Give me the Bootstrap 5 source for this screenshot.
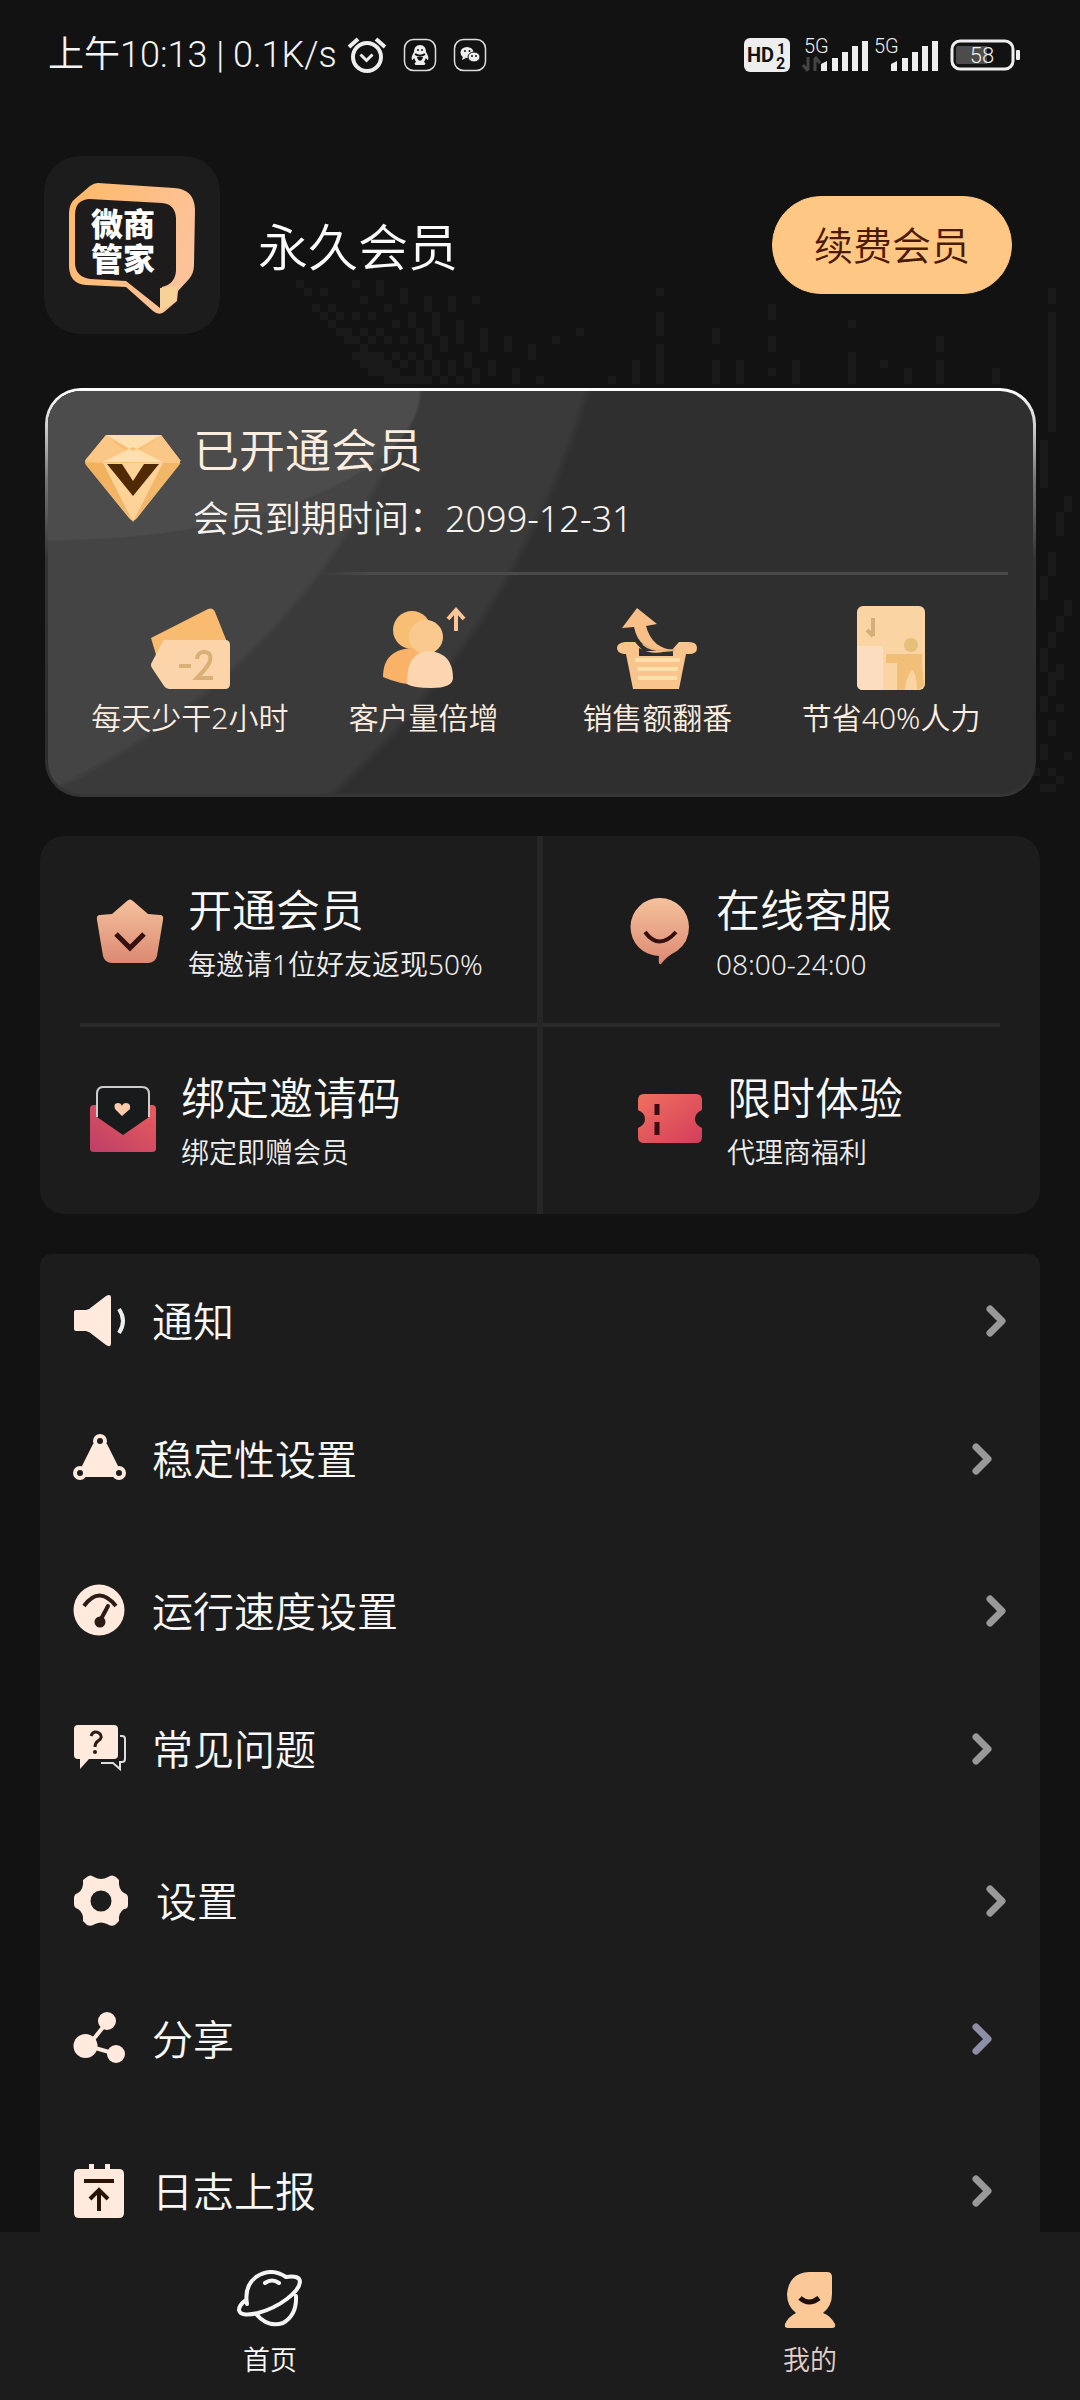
<!DOCTYPE html>
<html lang="zh-CN" data-bs-theme="dark">
<head>
<meta charset="utf-8">
<meta name="viewport" content="width=device-width, initial-scale=1">
<title>我的</title>
<link href="https://cdn.jsdelivr.net/npm/bootstrap@5.3.0/dist/css/bootstrap.min.css" rel="stylesheet">
<style>
  body { background: #121212; color: #fafafa; font-family: "Noto Sans", "Noto Sans CJK SC", sans-serif; font-weight: 350; }
  a { color: inherit; text-decoration: none; }
  svg { display: block; flex: none; }
  .wave { top: 280px; left: 280px; z-index: -1; }
  .statusbar { height: 110px; padding: 0 56px 0 48px; font-family: Roboto, "Noto Sans CJK SC", sans-serif; font-size: 36px; line-height: 40px; color: #f4f4f4; }
  .statusbar .left-icons { gap: 16px; }
  .page { padding: 0 40px; }
  .profile { padding: 0 28px 0 4px; margin-top: 46px; gap: 38px; }
  .avatar { width: 176px; height: 178px; border-radius: 36px; background: #1c1c1c; }
  .member-name { font-size: 50px; line-height: 60px; padding-top: 4px; }
  .btn-renew { --bs-btn-color: #4a1a04; --bs-btn-bg: #fec783; --bs-btn-border-color: #fec783; --bs-btn-hover-bg: #f5bb72; --bs-btn-hover-color: #4a1a04; --bs-btn-font-weight: 350; width: 240px; height: 98px; font-size: 39px; line-height: 48px; padding: 0; }
  .vip { margin: 54px 4px 0 5px; padding: 30px 25px 58px; border: 3px solid transparent; border-radius: 36px; color: #fbeee0;
    background:
      radial-gradient(ellipse 374px 150px at 0 0, #4c4c4c 99%, transparent 100%) padding-box,
      radial-gradient(circle 720px at -300px -250px, #444 99%, transparent 100%) padding-box,
      radial-gradient(circle 880px at -300px -250px, #3a3a3a 99%, transparent 100%) padding-box,
      linear-gradient(#2f2f2f, #2f2f2f) padding-box,
      linear-gradient(180deg, #fff 0, #d8d8d8 8%, #777 22%, #333 42%, #2c2c2c 90%, #363636 100%) border-box; }
  .vip-head { padding-left: 8px; gap: 8px; }
  .vip-title { font-size: 46px; line-height: 56px; }
  .vip-date { font-size: 36px; line-height: 44px; margin-top: 20px; color: #f6f2ee; }
  .vip-rule { height: 3px; margin-top: 31px; background: linear-gradient(90deg, transparent 26%, #4a4a4a 32%); }
  .perk { font-size: 30px; line-height: 36px; gap: 10px; }
  .perks { margin-top: 31px; }
  .panel { background: #1c1c1c; border-radius: 24px; }
  .quick { margin-top: 39px; }
  .quick-col { border-right: 3px solid #262626; }
  .quick-col + .quick-col { border-right: 0; border-left: 3px solid #262626; }
  .quick-link { height: 187px; gap: 24px; padding-top: 2px; }
  .rule-l + .quick-link, .rule-r + .quick-link { padding-top: 0; padding-bottom: 4px; }
  .quick-text { padding-top: 5px; }
  .quick-title { font-size: 44px; line-height: 52px; }
  .quick-sub { font-size: 28px; line-height: 36px; margin-top: 10px; color: #eee; }
  .rule-l, .rule-r { height: 4px; background: #2a2a2a; }
  .rule-l { margin-left: 40px; } .rule-r { margin-right: 40px; }
  .in-a { padding-left: 56px; } .in-b { padding-left: 49px; } .in-c { padding-left: 87px; } .in-d { padding-left: 94px; }
  .menu { margin-top: 40px; --bs-list-group-bg: transparent; --bs-list-group-border-width: 0; --bs-list-group-color: #f8f8f8; background: #1c1c1c; border-radius: 12px 12px 0 0; }
  .menu .list-group-item { height: 134px; padding: 0 34px 0 33px; font-size: 41px; line-height: 50px; gap: 25px; margin-bottom: 4px; }
  .menu .list-group-item:nth-child(even) { margin-bottom: 18px; }
  .menu .indent { padding-right: 48px; }
  .tabs { background: #1c1c1c; height: 168px; font-size: 27px; line-height: 32px; z-index: 10; }
  .tabs a { gap: 16px; padding-top: 38px; }
  .tab-on { color: #e4cfcb; }
</style>
<script src="https://cdn.jsdelivr.net/npm/bootstrap@5.3.0/dist/js/bootstrap.bundle.min.js"></script>
</head>
<body>
<!-- faint equalizer texture behind the header -->
<svg class="wave position-absolute" width="800" height="528" viewBox="0 0 100 66" fill="#1a1a1a" aria-hidden="true" shape-rendering="crispEdges"><path d="M2 0h1v1h-1zM9 0h1v1h-1zM12 0h1v2h-1zM3 1h1v1h-1zM5 1h1v1h-1zM15 1h1v2h-1zM47 1h1v1h-1zM96 1h1v2h-1zM10 2h1v1h-1zM18 2h1v2h-1zM21 2h1v2h-1zM24 2h1v1h-1zM4 3h1v1h-1zM6 3h1v1h-1zM13 3h1v1h-1zM61 3h1v2h-1zM5 4h1v1h-1zM7 4h1v1h-1zM9 4h1v1h-1zM11 4h1v1h-1zM16 4h1v2h-1zM19 4h1v3h-1zM47 4h1v3h-1zM96 4h1v15h-1zM6 5h1v1h-1zM14 5h1v1h-1zM22 5h1v3h-1zM71 5h1v1h-1zM7 6h2v1h-2zM10 6h1v1h-1zM12 6h1v1h-1zM17 6h1v2h-1zM25 6h1v3h-1zM37 6h1v1h-1zM54 6h1v2h-1zM8 7h2v1h-2zM11 7h1v1h-1zM13 7h1v1h-1zM15 7h1v1h-1zM20 7h1v2h-1zM28 7h1v2h-1zM34 7h1v1h-1zM61 7h1v2h-1zM82 7h1v2h-1zM10 8h1v1h-1zM18 8h1v2h-1zM31 8h1v2h-1zM47 8h1v5h-1zM9 9h4v1h-4zM14 9h1v1h-1zM16 9h1v1h-1zM23 9h1v2h-1zM71 9h1v4h-1zM10 10h4v1h-4zM15 10h1v1h-1zM17 10h1v3h-1zM19 10h1v2h-1zM21 10h1v2h-1zM26 10h1v2h-1zM44 10h1v3h-1zM54 10h1v3h-1zM57 10h1v3h-1zM64 10h1v3h-1zM75 10h1v1h-1zM82 10h1v3h-1zM11 11h4v1h-4zM24 11h1v2h-1zM29 11h1v2h-1zM61 11h1v1h-1zM78 11h1v2h-1zM89 11h1v2h-1zM13 12h4v1h-4zM18 12h1v1h-1zM20 12h1v1h-1zM22 12h1v1h-1zM32 12h1v1h-1zM41 12h1v1h-1zM95 20h1v6h-1zM98 27h1v2h-1zM97 29h1v3h-1zM96 34h1v3h-1zM95 37h1v3h-1zM98 40h1v2h-1zM97 42h1v2h-1zM96 44h1v2h-1zM95 46h1v3h-1zM97 48h1v2h-1zM96 49h1v3h-1zM95 52h1v2h-1zM97 53h1v1h-1zM96 55h1v2h-1zM95 58h1v2h-1zM98 59h1v1h-1zM96 61h1v1h-1zM94 61h1v1h-1zM97 62h1v1h-1zM95 63h2v1h-2z"/></svg>

<header class="statusbar d-flex align-items-center justify-content-between">
  <div class="d-flex align-items-center left-icons">
    <div class="d-flex align-items-center">
      <span>上午10:13 | 0.1K/s</span>
      <svg class="ms-2" width="42" height="36" viewBox="0 0 42 36" fill="none" stroke="#eee" stroke-width="4" aria-label="闹钟"><circle cx="22" cy="20" r="14"/><path d="M15.500 17.500l6 6 6-6" stroke-width="3"/><path d="M4 10l9-8M40 10l-9-8"/></svg>
    </div>
    <svg width="34" height="34" viewBox="0 0 34 34" aria-label="QQ"><rect x="1.500" y="1.500" width="31" height="31" rx="9" fill="none" stroke="#ddd" stroke-width="1.500"/><path d="M17 7c4 0 6 3 6 7 2 3 3 6 2 8-1 0-2-2-2-2l-2 4c2 1 2 3-1 3h-6c-3 0-3-2-1-3l-2-4s-1 2-2 2c-1-2 0-5 2-8 0-4 2-7 6-7z" fill="#eee"/><path d="M12 16c3 2 7 2 10 0" stroke="#121212" stroke-width="2" fill="none"/><circle cx="15" cy="12" r="1" fill="#121212"/><circle cx="19" cy="12" r="1" fill="#121212"/><path d="M14 19c1 5 5 5 6 0" fill="#121212"/></svg>
    <svg width="34" height="34" viewBox="0 0 34 34" aria-label="微信"><rect x="1.500" y="1.500" width="31" height="31" rx="9" fill="none" stroke="#ddd" stroke-width="1.500"/><ellipse cx="14" cy="14.500" rx="6.500" ry="5.500" fill="#eee"/><path d="M10 18l-1 4 4-2" fill="#eee"/><ellipse cx="21" cy="19" rx="6" ry="5" fill="#eee" stroke="#121212"/><g fill="#121212"><circle cx="12" cy="13" r="1"/><circle cx="16.500" cy="13" r="1"/><circle cx="19" cy="18" r="1"/><circle cx="23" cy="18" r="1"/></g></svg>
  </div>
  <svg width="280" height="44" viewBox="0 -2 280 44" fill="#eee" font-family="Roboto, sans-serif" aria-label="信号和电量">
    <rect x="0" y="3" width="46" height="34" rx="6"/>
    <g fill="#121212" font-weight="700"><text x="3" y="27" font-size="20">HD</text><text x="33" y="19" font-size="15">1</text><text x="32" y="34" font-size="16">2</text></g>
    <text x="60" y="18" font-size="20">5G</text><text x="130" y="18" font-size="20">5G</text>
    <path d="M64 22v13M59 30l5 6M71 36v-13M76 28l-5-6" stroke="#444" stroke-width="3" fill="none"/>
    <path id="bars" d="M77 29l6-3v10h-6zM88 23h6v13h-6zM98 17h6v19h-6zM108 11h6v25h-6zM118 6h6v30h-6z"/>
    <use href="#bars" x="70"/>
    <rect x="208" y="6" width="61" height="28" rx="8" fill="none" stroke="#eee" stroke-width="3"/>
    <path d="M214 11h29v18h-29q-2 0-2-2v-14q0-2 2-2z" fill="#4c4c4c"/><rect x="272" y="15" width="4" height="10" rx="1"/>
    <text x="238" y="28" font-size="22" text-anchor="middle">58</text>
  </svg>
</header>

<main class="page">
  <section class="profile d-flex align-items-center">
    <div class="avatar flex-shrink-0">
      <svg width="176" height="178" viewBox="0 0 176 178" aria-label="微商管家">
        <defs><linearGradient id="frame" x1="0" x2="1" y2=".4"><stop offset="0" stop-color="#ffb866"/><stop offset="1" stop-color="#fcc39a"/></linearGradient></defs>
        <path d="M54 27L130 32Q150 33 151 53L150 109Q150 117 145 123L134 135 133 145 120 156Q115 160 109 155L82 131 42 129Q26 128 25 111V57Q25 47 32 42L46 30Q50 27 54 27z" fill="url(#frame)"/>
        <path d="M45 43L118 47Q131 48 132 62V115Q131 128 118 131L116 152 82 125 46 123Q32 121 31 108V59Q31 44 45 43z" fill="#1d1b1c"/>
        <path d="M116 132l17-2-1 15-16 10z" fill="#f8d199"/>
        <text fill="#fff" font-family="'Noto Sans CJK SC', sans-serif" font-weight="900" font-size="32"><tspan x="47" y="80">微商</tspan><tspan x="47" y="115">管家</tspan></text>
      </svg>
    </div>
    <div class="member-name flex-grow-1">永久会员</div>
    <button type="button" class="btn btn-renew rounded-pill">续费会员</button>
  </section>

  <section class="vip">
    <div class="vip-head d-flex align-items-start">
      <svg class="mt-2" width="104" height="100" viewBox="0 0 104 100" aria-hidden="true">
        <defs><linearGradient id="gold" x1="0" y1="0" x2="1" y2="1"><stop offset="0" stop-color="#f5b45c"/><stop offset="1" stop-color="#ffd9a6"/></linearGradient></defs>
        <path d="M25 6h55l18 24q2 3 0 6L56 89q-4 5-8 0L5 36q-2-3 0-6z" fill="url(#gold)"/>
        <path d="M25 6l27 22-30 6-18-2zM80 6L52 28l30 6 18-2z" fill="#fbc786"/><path d="M25 6h55L52 22zM22 33h60L52 18z" fill="#ffdfae"/><path d="M22 34h60L52 93z" fill="#fdd398"/><path d="M4 34h18l30 59zM100 34H82L52 93z" fill="#eda851" opacity=".6"/>
        <path d="M26 35h15l11 17 11-17h15L52 67z" fill="#502a04"/>
      </svg>
      <div>
        <div class="vip-title">已开通会员</div>
        <div class="vip-date">会员到期时间：2099-12-31</div>
      </div>
    </div>
    <div class="vip-rule"></div>
    <div class="perks row g-0 text-center">
      <div class="col perk d-flex flex-column align-items-center">
        <svg width="84" height="84" viewBox="0 0 84 84" aria-hidden="true"><path d="M3 32L60 3q5-2 7 3l12 30L12 62z" fill="#f9bb70"/><path d="M17 34h60q5 0 5 5v39q0 5-5 5H21q-3 0-5-3L4 62q-2-3 0-6L14 37q1-3 3-3z" fill="#fbd5a9"/><path d="M31 60h12M49 53q1-8 8-7 7 1 5 9-2 6-13 17h16" fill="none" stroke="#d9b076" stroke-width="4"/></svg>
        <span>每天少干2小时</span>
      </div>
      <div class="col perk d-flex flex-column align-items-center">
        <svg width="84" height="84" viewBox="0 0 84 84" aria-hidden="true"><circle cx="30" cy="24" r="19" fill="#f8bf74"/><path d="M1 71C1 44 22 42 35 42s30 15 30 30q-30 14-64-1z" fill="#f9b268"/><circle cx="44" cy="31" r="17" fill="#fac98e"/><path d="M25 78q-1-32 22-33 24 2 24 27 0 10-22 10-18 0-24-4z" fill="#fbd6b0"/><path d="M74 25V6M66 13l8-9 8 9" fill="none" stroke="#fbc597" stroke-width="4"/></svg>
        <span>客户量倍增</span>
      </div>
      <div class="col perk d-flex flex-column align-items-center">
        <svg width="84" height="84" viewBox="0 0 84 84" aria-hidden="true"><path d="M22 2L42 18l-11 2Q37 43 60 44q-35 6-41-23L7 22z" fill="#f8c088"/><path d="M10 36h10l8 9h28l8-9h10q8 0 8 6t-8 6h-3l-7 35H18L11 48h-2q-7-1-7-6t8-6z" fill="#fac58c"/><path d="M20 54h45M22 63h41M23 72h39" stroke="#fee0ab" stroke-width="4"/><path d="M24 42q15 9 34 1v7H24z" fill="#2f2f2f"/><path d="M28 38q10 9 32 6" stroke="#e4b878" stroke-width="2" fill="none"/></svg>
        <span>销售额翻番</span>
      </div>
      <div class="col perk d-flex flex-column align-items-center">
        <svg width="84" height="84" viewBox="0 0 84 84" aria-hidden="true"><rect x="8" y="0" width="68" height="84" rx="6" fill="#fbd4a3"/><path d="M8 40h26v44H14q-6 0-6-6z" fill="#fdddc0"/><path d="M24 12v18M18 24l6 6" stroke="#d6ae77" stroke-width="4" fill="none"/><path d="M37 48h36v10l2 22-7 4q0-16-5-20-6 7-7 20h-8V57H37z" fill="#f2bf79"/><circle cx="62" cy="39" r="7" fill="#e6bf7b"/></svg>
        <span>节省40%人力</span>
      </div>
    </div>
  </section>

  <section class="panel quick row g-0">
    <div class="col-6 quick-col">
      <a href="#open" class="quick-link in-a d-flex align-items-center">
        <svg width="68" height="68" viewBox="0 0 68 68" aria-hidden="true"><defs><linearGradient id="peach" x2="0" y2="1"><stop offset="0" stop-color="#f5c29c"/><stop offset="1" stop-color="#dc8973"/></linearGradient></defs><path d="M31 4q3-3 6 0l15 13 12 1q4 0 3 5l-6 36q-2 7-9 7H16q-7 0-9-7L1 23q-1-5 3-5l12-1z" fill="url(#peach)"/><path d="M20 37l14 14 14-14" fill="none" stroke="#351010" stroke-width="5"/></svg>
        <span class="quick-text"><span class="quick-title d-block">开通会员</span><span class="quick-sub d-block">每邀请1位好友返现50%</span></span>
      </a>
      <div class="rule-l"></div>
      <a href="#bind" class="quick-link in-b d-flex align-items-center">
        <svg width="68" height="68" viewBox="0 0 68 68" aria-hidden="true"><defs><linearGradient id="rose" x1="1" x2="0" y2="1"><stop offset="0" stop-color="#ea5b5b"/><stop offset="1" stop-color="#bd3f68"/></linearGradient></defs><path d="M1 24q0-4 4-4h58q4 0 4 4v40q0 3-4 3H5q-4 0-4-3z" fill="url(#rose)"/><path d="M8 9q0-7 6-7h39q7 0 7 7v23L34 50 8 32z" fill="#181a1c"/><path d="M8 32V9q0-7 6-7h39q7 0 7 7v23" fill="none" stroke="#ccc" stroke-width="2"/><path d="M33 31l-7-7q-2-6 3-6 3 0 4 3 1-3 4-3 5 0 4 6z" fill="#fccbab"/></svg>
        <span class="quick-text"><span class="quick-title d-block">绑定邀请码</span><span class="quick-sub d-block">绑定即赠会员</span></span>
      </a>
    </div>
    <div class="col-6 quick-col">
      <a href="#service" class="quick-link in-c d-flex align-items-center">
        <svg width="62" height="68" viewBox="0 0 62 68" aria-hidden="true"><path d="M30 1a29 29 0 0 1 29 29q0 15-12 24-10 5-16 13-3 2-2-8A29 29 0 0 1 30 1z" fill="url(#peach)"/><path d="M15 35q14 19 31 0" fill="none" stroke="#351010" stroke-width="4"/></svg>
        <span class="quick-text"><span class="quick-title d-block">在线客服</span><span class="quick-sub d-block">08:00-24:00</span></span>
      </a>
      <div class="rule-r"></div>
      <a href="#trial" class="quick-link in-d d-flex align-items-center">
        <svg width="66" height="68" viewBox="0 0 66 68" aria-hidden="true"><defs><linearGradient id="coral" x2="1" y2="1"><stop offset="0" stop-color="#f0705f"/><stop offset="1" stop-color="#d33d5b"/></linearGradient></defs><path d="M7 9h52q6 0 6 6v10q-7 3-7 9t7 9v9q0 6-6 6H7q-6 0-6-6v-9q7-3 7-9t-7-9V15q0-6 6-6z" fill="url(#coral)"/><path d="M20 19v11M20 37v13" stroke="#3a0d14" stroke-width="5"/></svg>
        <span class="quick-text"><span class="quick-title d-block">限时体验</span><span class="quick-sub d-block">代理商福利</span></span>
      </a>
    </div>
  </section>

  <nav class="menu list-group" aria-label="设置菜单">
    <a href="#notice" class="list-group-item list-group-item-action d-flex align-items-center">
      <svg width="54" height="54" viewBox="0 0 54 54" aria-hidden="true"><path d="M3 16h10Q17 15 20 12L33 2q5-3 5 2v45q0 5-5 2L20 41q-3-3-7-4H3q-2 0-2-2V18q0-2 2-2z" fill="#ffeadd"/><path d="M46 15q8 12 0 24" fill="none" stroke="#eee" stroke-width="4"/></svg>
      <span class="flex-grow-1">通知</span><svg width="20" height="32" viewBox="0 0 20 32" fill="none" stroke="#999" stroke-width="7" stroke-linecap="round" stroke-linejoin="round"><path d="M4 4l12 12-12 12"/></svg>
    </a>
    <a href="#stability" class="indent list-group-item list-group-item-action d-flex align-items-center">
      <svg width="54" height="54" viewBox="0 0 54 54" aria-hidden="true"><path d="M20 12L8 36l2 9h34l2-9-12-24z" fill="#ffeadd"/><g fill="#1c1c1c" stroke="#ffeadd" stroke-width="4"><circle cx="27" cy="9" r="5"/><circle cx="7" cy="41" r="5"/><circle cx="46" cy="41" r="5"/></g></svg>
      <span class="flex-grow-1">稳定性设置</span><svg width="20" height="32" viewBox="0 0 20 32" fill="none" stroke="#999" stroke-width="7" stroke-linecap="round" stroke-linejoin="round"><path d="M4 4l12 12-12 12"/></svg>
    </a>
    <a href="#speed" class="list-group-item list-group-item-action d-flex align-items-center">
      <svg width="54" height="54" viewBox="0 0 54 54" aria-hidden="true"><circle cx="26" cy="26" r="25.500" fill="#ffeadd"/><path d="M11 22q15-21 32 0" fill="none" stroke="#2a1c14" stroke-width="4"/><path d="M27 37l8-15" stroke="#2a1c14" stroke-width="4" stroke-linecap="round"/><circle cx="27" cy="38" r="5.500" fill="#2a1c14"/></svg>
      <span class="flex-grow-1">运行速度设置</span><svg width="20" height="32" viewBox="0 0 20 32" fill="none" stroke="#999" stroke-width="7" stroke-linecap="round" stroke-linejoin="round"><path d="M4 4l12 12-12 12"/></svg>
    </a>
    <a href="#faq" class="indent list-group-item list-group-item-action d-flex align-items-center">
      <svg width="54" height="54" viewBox="0 0 54 54" aria-hidden="true"><path d="M5 3h36q4 0 4 4v26q0 4-4 4H16L7 47V37H5q-4 0-4-4V7q0-4 4-4z" fill="#ffeadd"/><path d="M47 14h2q3 0 3 3v20q0 3-3 3h-2v7l-7-6H28" fill="none" stroke="#ddd" stroke-width="2"/><path d="M18 14q2-6 8-3 5 4-1 8-3 2-3 6" fill="none" stroke="#2a1c14" stroke-width="3"/><circle cx="22" cy="30" r="2" fill="#2a1c14"/></svg>
      <span class="flex-grow-1">常见问题</span><svg width="20" height="32" viewBox="0 0 20 32" fill="none" stroke="#999" stroke-width="7" stroke-linecap="round" stroke-linejoin="round"><path d="M4 4l12 12-12 12"/></svg>
    </a>
    <a href="#settings" class="list-group-item list-group-item-action d-flex align-items-center">
      <svg width="58" height="54" viewBox="0 0 58 54" aria-hidden="true"><path d="M14 3q3-3 7 0 7 4 14 0 4-3 8 0l3 3q-1 9 5 13 4 1 4 5v7q0 4-4 4-6 4-5 12l-4 4q-4 2-8-1-6-3-12 0-4 3-8 1l-4-4q1-8-5-12-4-1-4-5v-6q0-4 4-5 6-4 5-13z" fill="#ffeadd"/><circle cx="28" cy="27" r="10.500" fill="#1c1c1c"/></svg>
      <span class="flex-grow-1">设置</span><svg width="20" height="32" viewBox="0 0 20 32" fill="none" stroke="#999" stroke-width="7" stroke-linecap="round" stroke-linejoin="round"><path d="M4 4l12 12-12 12"/></svg>
    </a>
    <a href="#share" class="indent list-group-item list-group-item-action d-flex align-items-center">
      <svg width="54" height="54" viewBox="0 0 54 54" aria-hidden="true"><path d="M35 9L15 34l28 8" fill="none" stroke="#ffeadd" stroke-width="4"/><g fill="#ffeadd"><circle cx="34" cy="9" r="9"/><circle cx="12.500" cy="34" r="12"/><circle cx="43" cy="42" r="9"/></g></svg>
      <span class="flex-grow-1">分享</span><svg width="20" height="32" viewBox="0 0 20 32" fill="none" stroke="#8e8ea6" stroke-width="7" stroke-linecap="round" stroke-linejoin="round"><path d="M4 4l12 12-12 12"/></svg>
    </a>
    <a href="#log" class="indent list-group-item list-group-item-action d-flex align-items-center">
      <svg width="54" height="54" viewBox="0 0 54 54" aria-hidden="true"><path d="M6 5h10V0h5v5h11V0h5v5h9q5 0 5 5v39q0 5-5 5H6q-5 0-5-5V10q0-5 5-5z" fill="#ffeadd"/><path d="M11 17h30M26 47V28M17 35l9-9 9 9" fill="none" stroke="#2a1408" stroke-width="4"/></svg>
      <span class="flex-grow-1">日志上报</span><svg width="20" height="32" viewBox="0 0 20 32" fill="none" stroke="#999" stroke-width="7" stroke-linecap="round" stroke-linejoin="round"><path d="M4 4l12 12-12 12"/></svg>
    </a>
  </nav>
</main>

<nav class="tabs fixed-bottom row g-0" aria-label="底部导航">
  <a href="#home" class="col d-flex flex-column align-items-center">
    <svg width="66" height="58" viewBox="0 0 66 58" fill="none" stroke="#f4f4f4" stroke-width="4" stroke-linecap="round" stroke-linejoin="round" aria-hidden="true"><path d="M10 34Q7 16 19 7q15-10 30 0 14-2 14 5c-1 10-20 25-42 31Q3 47 2 40q0-5 7-10M19 44q12 14 27 9 14-8 13-27M28 13q7-5 14 0"/></svg>
    <span>首页</span>
  </a>
  <a href="#me" class="col d-flex flex-column align-items-center tab-on" aria-current="page">
    <svg width="66" height="58" viewBox="0 0 66 58" aria-hidden="true"><path d="M32 2h18q5 0 5 5v17q0 12-9 19 8 3 12 11 1 4-3 4H11q-4 0-3-4 3-7 11-11-9-7-9-19Q12 3 32 2z" fill="#fbc997"/><path d="M23 28q9 8 19 0" fill="none" stroke="#1c0d08" stroke-width="5"/></svg>
    <span>我的</span>
  </a>
</nav>
</body>
</html>
